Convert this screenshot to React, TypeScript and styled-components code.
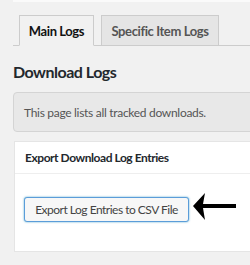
import React from 'react';
import styled, { createGlobalStyle } from 'styled-components';

const GlobalStyle = createGlobalStyle`
    body {
        margin: 0;
        background: #f1f1f1;
        font-family: Lato, "Open Sans", sans-serif;
        color: #23282d;
        overflow: hidden;
    }
`;

const Page = styled.div`
    width: 250px;
    height: 265px;
    padding-left: 13px;
    box-sizing: border-box;
    overflow: hidden;
`;

const TopEdge = styled.div`
    height: 2px;
    background: #fafafa;
    margin-right: -20px;
`;

const TabNav = styled.div`
    display: flex;
    gap: 7px;
    margin-top: 13px;
    padding-left: 6px;
    border-bottom: 1px solid #ccc;
    margin-right: -20px;
`;

const Tab = styled.div<{ active?: boolean; width: number }>`
    display: flex;
    align-items: center;
    justify-content: center;
    box-sizing: border-box;
    height: 31px;
    margin-bottom: -1px;
    padding-top: 1px;
    border: 1px solid #ccc;
    border-bottom-color: ${props => (props.active ? '#f1f1f1' : '#ccc')};
    background: ${props => (props.active ? '#f1f1f1' : '#e5e5e5')};
    color: ${props => (props.active ? '#111' : '#555')};
    font-size: 13px;
    font-weight: 700;
    letter-spacing: -0.4px;
    width: ${props => props.width}px;
`;

const Heading = styled.h1`
    margin: 14px 0 0;
    font-size: 16px;
    font-weight: 700;
    letter-spacing: -0.5px;
    line-height: 23px;
    color: #23282d;
`;

const Notice = styled.div`
    display: flex;
    align-items: center;
    box-sizing: border-box;
    height: 40px;
    margin-top: 9px;
    margin-right: -20px;
    padding-left: 10px;
    background: #e8e8e8;
    border: 1px solid #d4d4d4;
    border-radius: 4px;
    font-size: 12px;
    letter-spacing: -0.3px;
    color: #555;
`;

const Panel = styled.div`
    margin-top: 9px;
    margin-left: 1px;
    margin-right: -20px;
    background: #fff;
    border: 1px solid #e5e5e5;
    border-right: none;
`;

const PanelHeader = styled.div`
    display: flex;
    align-items: center;
    height: 31px;
    padding-left: 10px;
    border-bottom: 1px solid #eee;
    font-size: 12px;
    font-weight: 700;
    letter-spacing: -0.45px;
    color: #23282d;
`;

const PanelBody = styled.div`
    display: flex;
    align-items: center;
    gap: 4px;
    padding: 22px 0 29px 9px;
`;

const ExportButton = styled.button`
    box-sizing: border-box;
    height: 25px;
    width: 165px;
    padding: 0;
    border: 1px solid #5b9dd9;
    border-radius: 3px;
    background: #f7f7f7;
    box-shadow: 0 0 2px rgba(30, 140, 190, 0.8);
    color: #444;
    font-family: inherit;
    font-size: 12px;
    letter-spacing: -0.5px;
    white-space: nowrap;
`;

const Arrow = () => (
    <svg width="44" height="30" viewBox="0 0 44 30" style={{ marginTop: -4 }}>
        <path d="M0 14 L12 1 L10 12 L43 12 L43 16 L10 16 L12 28 Z" fill="#000" />
    </svg>
);

const App = () => (
    <Page>
        <GlobalStyle />
        <TopEdge />
        <TabNav>
            <Tab active width={75}>
                Main Logs
            </Tab>
            <Tab width={118}>Specific Item Logs</Tab>
        </TabNav>
        <Heading>Download Logs</Heading>
        <Notice>This page lists all tracked downloads.</Notice>
        <Panel>
            <PanelHeader>Export Download Log Entries</PanelHeader>
            <PanelBody>
                <ExportButton type="button">Export Log Entries to CSV File</ExportButton>
                <Arrow />
            </PanelBody>
        </Panel>
    </Page>
);

export default App;
